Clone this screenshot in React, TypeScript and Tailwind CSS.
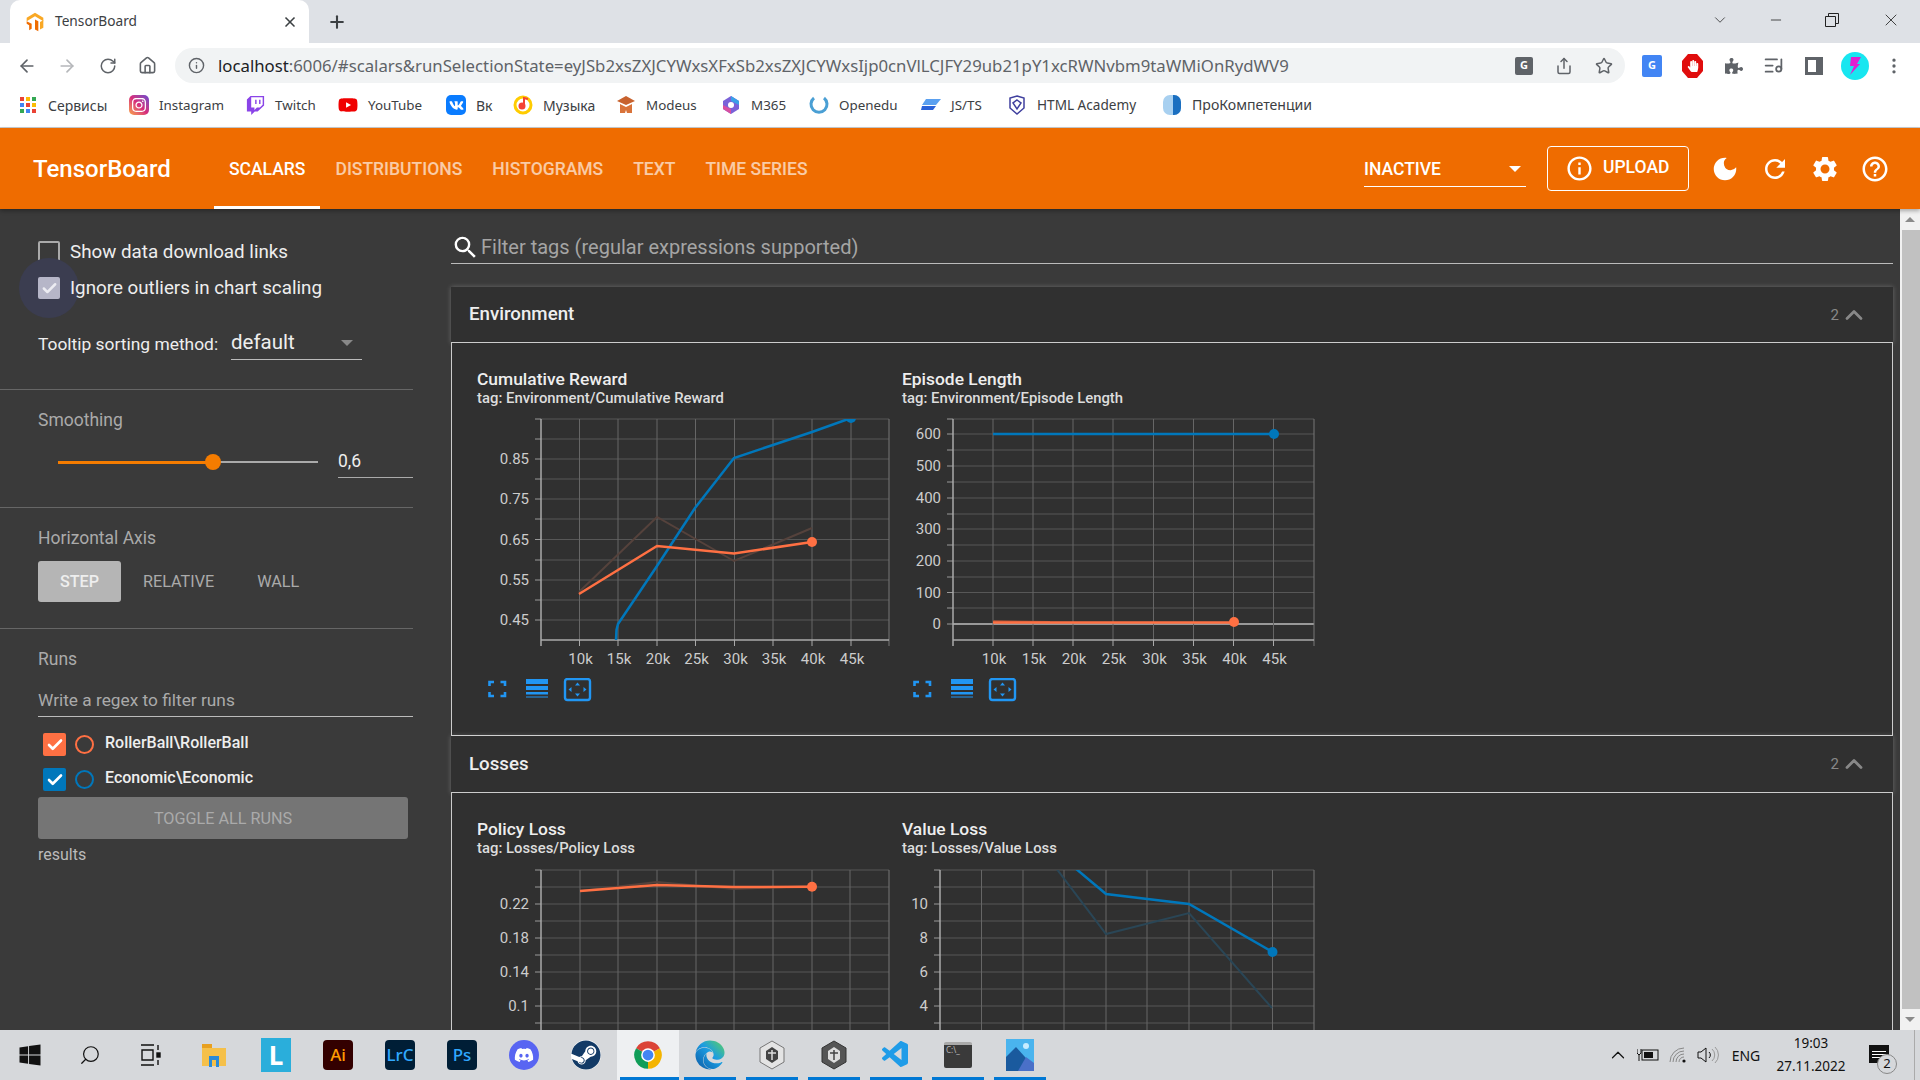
import { ArrowLeft, ArrowRight, RotateCw, Home, Info, Star, Share, X, Plus, Minus, ChevronDown, ChevronUp, ListMusic, EllipsisVertical, Search, Check } from 'lucide-react';
import { FaDiscord, FaEdge, FaHandPaper, FaPuzzlePiece, FaSteam, FaTwitch, FaVk, FaWindows, FaYoutube, FaInstagram } from 'react-icons/fa';
import { MdDarkMode, MdHelpOutline, MdInfoOutline, MdRefresh, MdSearch, MdSettings } from 'react-icons/md';
import { VscVscode } from 'react-icons/vsc';
import type { ReactNode } from 'react';

const ORANGE = '#ff7043';
const BLUE = '#0077bb';

/* ---------- browser chrome ---------- */

function TensorIcon({ size = 20 }: { size?: number }) {
  return (
    <svg width={size} height={size} viewBox="0 0 24 24">
      <path d="M12 1 L22 7 V11 L12 5 L2 11 V7 Z" fill="#f9a825" />
      <path d="M2 11 L8 14 V20 L5 22 V16 L2 14 Z" fill="#ef6c00" />
      <path d="M12 9 L16 11 V23 L12 21 Z" fill="#ef6c00" />
      <path d="M18 12 L22 10 V19 L18 21 Z" fill="#f9a825" />
    </svg>
  );
}

// text widths differ per word in the reference font, so each label gets its own box
const bookmarks: { label: string; textClass: string; icon: ReactNode }[] = [
  {
    label: 'Сервисы',
    textClass: 'w-[60px] text-[14px]',
    icon: (
      <span className="grid grid-cols-3 gap-[2px] w-[16px]">
        {['#ea4335', '#fbbc04', '#34a853', '#4285f4', '#ea4335', '#fbbc04', '#34a853', '#4285f4', '#ea4335'].map((c, i) => (
          <span key={i} className="w-[4px] h-[4px]" style={{ background: c }} />
        ))}
      </span>
    ),
  },
  {
    label: 'Instagram',
    textClass: 'w-[65px] text-[13.4px]',
    icon: (
      <span className="w-[20px] h-[20px] rounded-[5px] bg-gradient-to-tr from-[#f9a03c] via-[#d6297b] to-[#6a3fd0] flex items-center justify-center text-white">
        <FaInstagram size={16} />
      </span>
    ),
  },
  { label: 'Twitch', textClass: 'w-[42px] text-[13.4px]', icon: <FaTwitch size={19} className="text-[#8a44e8]" /> },
  { label: 'YouTube', textClass: 'w-[57px] text-[13.4px]', icon: <FaYoutube size={22} className="text-[#f00000]" /> },
  {
    label: 'Вк',
    textClass: 'w-[16px] text-[14px]',
    icon: (
      <span className="w-[20px] h-[20px] rounded-[5px] bg-[#0a7cff] flex items-center justify-center text-white">
        <FaVk size={15} />
      </span>
    ),
  },
  {
    label: 'Музыка',
    textClass: 'w-[52px] text-[14px]',
    icon: (
      <svg width="20" height="20" viewBox="0 0 20 20">
        <circle cx="10" cy="10" r="8" fill="none" stroke="#fc0" strokeWidth="3" />
        <circle cx="9" cy="11" r="3.5" fill="#f44336" />
        <path d="M11 11 V3 L15 4" fill="none" stroke="#f44336" strokeWidth="2" />
      </svg>
    ),
  },
  {
    label: 'Modeus',
    textClass: 'w-[54px] text-[13.4px]',
    icon: (
      <svg width="20" height="20" viewBox="0 0 20 20">
        <path d="M10 1 L19 6 L10 10 L1 6 Z" fill="#c8622e" />
        <path d="M4 9 L10 12 L16 9 V18 H11 L10 15 L9 18 H4 Z" fill="#d9733a" />
      </svg>
    ),
  },
  {
    label: 'M365',
    textClass: 'w-[37px] text-[13.4px]',
    icon: (
      <svg width="20" height="20" viewBox="0 0 20 20">
        <path d="M10 1 L18 6 V14 L10 19 L2 14 V6 Z" fill="#7a62d8" />
        <path d="M10 1 L18 6 V10 L10 6 Z" fill="#3aa0e8" />
        <path d="M2 10 L10 14 V19 L2 14 Z" fill="#d84fa0" />
        <circle cx="10" cy="10" r="3" fill="#fff" />
      </svg>
    ),
  },
  {
    label: 'Openedu',
    textClass: 'w-[61px] text-[13.4px]',
    icon: (
      <svg width="20" height="20" viewBox="0 0 20 20">
        <path d="M5 3 A8 8 0 1 0 15 3" fill="none" stroke="#4a9fd4" strokeWidth="3" />
      </svg>
    ),
  },
  {
    label: 'JS/TS',
    textClass: 'w-[35px] text-[13.4px]',
    icon: (
      <svg width="20" height="20" viewBox="0 0 20 20">
        <path d="M5 4 H20 L15 10 H1 Z" fill="#5aa0f0" />
        <path d="M1 11 H15 L12 15 H0 Z" fill="#2a62d8" />
      </svg>
    ),
  },
  {
    label: 'HTML Academy',
    textClass: 'w-[104px] text-[13.6px]',
    icon: (
      <svg width="20" height="20" viewBox="0 0 20 20">
        <path d="M10 1 L17 3 V13 L10 19 L3 13 V3 Z" fill="none" stroke="#3f3f9e" strokeWidth="1.5" />
        <path d="M10 5 L14 8 L10 14 L6 8 Z" fill="none" stroke="#3f3f9e" strokeWidth="1.5" />
      </svg>
    ),
  },
  {
    label: 'ПроКомпетенции',
    textClass: 'w-[121px] text-[14.1px]',
    icon: (
      <svg width="20" height="22" viewBox="0 0 20 22">
        <rect x="1" y="1" width="18" height="20" rx="7" fill="#a8d0f0" />
        <path d="M11 1 H12 A7 7 0 0 1 19 8 V14 A7 7 0 0 1 12 21 H11 Z" fill="#1b6fc0" />
      </svg>
    ),
  },
];

function TabStrip() {
  return (
    <div className="h-[43px] bg-[#dee1e6] flex items-end shrink-0">
      <div className="ml-[10px] w-[299px] h-[43px] bg-white rounded-t-[10px] flex items-center pl-[15px] pr-[11px]">
        <TensorIcon />
        <span className="ml-[10px] text-[13.7px] text-[#3c4043] flex-1">TensorBoard</span>
        <X size={16} strokeWidth={2.5} className="text-[#3c4043]" />
      </div>
      <div className="h-[43px] flex items-center ml-[18px]">
        <Plus size={20} strokeWidth={2.5} className="text-[#3c4043]" />
      </div>
      <div className="ml-auto h-[43px] pb-[4px] flex items-center text-[#222]">
        <ChevronDown size={18} strokeWidth={1} className="mr-[39px]" />
        <Minus size={16} strokeWidth={1.2} className="mr-[41px]" />
        <svg width="14" height="14" viewBox="0 0 14 14" className="mr-[42px]">
          <path d="M0.5 3.5 H10.5 V13.5 H0.5 Z M3.5 3.5 V0.5 H13.5 V10.5 H10.5" fill="none" stroke="#222" />
        </svg>
        <X size={20} strokeWidth={1} className="mr-[19px]" />
      </div>
    </div>
  );
}

function Toolbar() {
  return (
    <div className="h-[42px] bg-white flex items-center shrink-0 text-[#5f6368] pt-[3px]">
      <ArrowLeft size={20} className="ml-[17px]" />
      <ArrowRight size={20} className="ml-[20px] text-[#b5b7ba]" />
      <RotateCw size={18} className="ml-[22px]" />
      <Home size={19} className="ml-[21px]" />
      <div className="ml-[18px] w-[1450px] h-[35px] rounded-full bg-[#f1f3f4] flex items-center pl-[13px] pr-[12px]">
        <Info size={17} />
        <span className="ml-[13px] text-[16.75px] text-[#5f6368] whitespace-nowrap">
          <span className="text-[#202124]">localhost</span>
          :6006/#scalars&amp;runSelectionState=eyJSb2xsZXJCYWxsXFxSb2xsZXJCYWxsIjp0cnVlLCJFY29ub21pY1xcRWNvbm9taWMiOnRydWV9
        </span>
        <span className="ml-auto flex items-center gap-[22px]">
          <span className="w-[18px] h-[18px] bg-[#5f6368] rounded-[2px] text-white text-[11px] font-bold flex items-center justify-center">G</span>
          <Share size={18} />
          <Star size={18} />
        </span>
      </div>
      <div className="ml-[17px] w-[20px] h-[22px] bg-[#4285f4] rounded-[2px] text-white text-[11px] font-bold flex items-center justify-center">G</div>
      <div className="ml-[20px] relative w-[21px] h-[24px] flex items-center justify-center text-white">
        <svg width="21" height="24" viewBox="0 0 21 24" className="absolute inset-0">
          <path d="M6 0 H15 L21 7 V17 L15 24 H6 L0 17 V7 Z" fill="#e00d0d" />
        </svg>
        <FaHandPaper size={12} className="relative" />
      </div>
      <FaPuzzlePiece size={18} className="ml-[22px]" />
      <ListMusic size={21} className="ml-[20px]" />
      <svg width="18" height="18" viewBox="0 0 18 18" className="ml-[21px]">
        <path d="M0 0 H18 V18 H0 Z M3 3 V15 H11 V3 Z" fill="#5f6368" fillRule="evenodd" />
      </svg>
      <div className="ml-[18px] w-[28px] h-[28px] rounded-full bg-[#18e6f0] flex items-center justify-center">
        <svg width="14" height="20" viewBox="0 0 14 20">
          <path d="M3 1 H13 L9 8 H12 L2 19 L6 10 H2 Z" fill="#e020d0" />
        </svg>
      </div>
      <EllipsisVertical size={20} className="ml-[15px]" />
    </div>
  );
}

function BookmarkBar() {
  return (
    <div className="h-[43px] bg-white border-b border-[#c9cccf] flex items-center pl-[18px] pb-[2px] gap-[21px] shrink-0">
      {bookmarks.map((b) => (
        <div key={b.label} className="flex items-center gap-[10px]">
          <span className="w-[20px] h-[22px] flex items-center justify-center">{b.icon}</span>
          <span className={`${b.textClass} text-[#3c4043] whitespace-nowrap`}>{b.label}</span>
        </div>
      ))}
    </div>
  );
}

/* ---------- tensorboard header ---------- */

const tabs = ['SCALARS', 'DISTRIBUTIONS', 'HISTOGRAMS', 'TEXT', 'TIME SERIES'];

function Header() {
  return (
    <div className="relative z-20 h-[81px] bg-[#ef6c00] flex items-stretch pl-[33px] pr-[20px] text-white shrink-0 font-[Roboto,sans-serif] shadow-[0_2px_4px_rgba(0,0,0,0.3)]">
      <div className="self-center text-[24px] font-medium w-[136px] whitespace-nowrap mr-[45px]">TensorBoard</div>
      {tabs.map((t, i) => (
        <div
          key={t}
          className={
            i === 0
              ? 'px-[15px] flex items-center text-[17.5px] font-medium border-b-[3px] border-white pt-[5px]'
              : 'px-[15px] flex items-center text-[17.5px] font-medium border-b-[3px] border-transparent pt-[5px] text-white/65'
          }
        >
          {t}
        </div>
      ))}
      <div className="ml-auto flex items-center">
        <div className="w-[162px] h-[34px] border-b border-white flex items-center justify-between pr-[5px] mt-[2px] text-[17.5px] font-medium">
          INACTIVE
          <span className="w-0 h-0 border-x-[6px] border-x-transparent border-t-[6px] border-t-white" />
        </div>
        <div className="ml-[21px] w-[142px] h-[45px] border border-white rounded-[4px] flex items-center pl-[17px] text-[17.5px] font-medium">
          <MdInfoOutline size={29} />
          <span className="ml-[9px] -mt-[2px]">UPLOAD</span>
        </div>
        <div className="ml-[11px] flex items-center">
          <div className="w-[50px] flex justify-center"><MdDarkMode size={30} /></div>
          <div className="w-[50px] flex justify-center"><MdRefresh size={30} /></div>
          <div className="w-[50px] flex justify-center"><MdSettings size={30} /></div>
          <div className="w-[50px] flex justify-center"><MdHelpOutline size={30} /></div>
        </div>
      </div>
    </div>
  );
}

/* ---------- sidebar ---------- */

function RunRow({ name, color }: { name: string; color: string }) {
  return (
    <div className="flex items-center ml-[5px] h-[23px]">
      <span className="w-[23px] h-[23px] rounded-[2px] flex items-center justify-center" style={{ background: color }}>
        <Check size={18} strokeWidth={3.5} className="text-white" />
      </span>
      <span className="ml-[9px] w-[19px] h-[19px] rounded-full border-2" style={{ borderColor: color }} />
      <span className="ml-[11px] text-[16px] font-medium text-[#eee] -mt-[3px]">{name}</span>
    </div>
  );
}

function Sidebar() {
  return (
    <div className="w-[413px] shrink-0 text-[#eee]">
      <div className="pl-[38px] pt-[32px] pb-[29px] border-b border-[#666]">
        <div className="flex items-center h-[22px]">
          <span className="w-[22px] h-[22px] rounded-[2px] border-2 border-[#aaa]" />
          <span className="ml-[10px] text-[18.8px] pt-[1px]">Show data download links</span>
        </div>
        <div className="relative flex items-center h-[22px] mt-[14px]">
          <span className="absolute left-[-19px] top-[-19px] w-[60px] h-[60px] rounded-full bg-[#3b3d50]" />
          <span className="relative w-[22px] h-[22px] rounded-[2px] bg-[#b6b6c8] flex items-center justify-center">
            <Check size={17} strokeWidth={3.5} className="text-[#ececf2]" />
          </span>
          <span className="relative ml-[10px] text-[18.8px] pt-[1px]">Ignore outliers in chart scaling</span>
        </div>
        <div className="flex items-center mt-[27px] h-[34px]">
          <span className="text-[17.4px] w-[193px] pt-[2px]">Tooltip sorting method:</span>
          <div className="w-[131px] h-[34px] border-b border-[#bbb] flex items-center justify-between pr-[9px] text-[20.5px]">
            default
            <span className="w-0 h-0 border-x-[6px] border-x-transparent border-t-[6px] border-t-[#888]" />
          </div>
        </div>
      </div>

      <div className="pl-[38px] pt-[20px] pb-[29px] border-b border-[#666]">
        <div className="h-[20px] leading-[20px] text-[17.5px] text-[#aaa]">Smoothing</div>
        <div className="flex items-center mt-[15px] h-[33px]">
          <div className="ml-[20px] w-[260px] h-[2px] bg-[#aaa] relative">
            <div className="h-[3px] w-[155px] bg-[#f57c00]" />
            <span className="absolute left-[147px] top-[-7px] w-[16px] h-[16px] rounded-full bg-[#f57c00]" />
          </div>
          <div className="ml-[20px] w-[75px] h-[33px] border-b border-[#aaa] flex items-center text-[17.5px]">0,6</div>
        </div>
      </div>

      <div className="pl-[38px] pt-[20px] pb-[26px] border-b border-[#666]">
        <div className="h-[20px] leading-[20px] text-[17.5px] text-[#aaa]">Horizontal Axis</div>
        <div className="flex items-center mt-[13px] text-[16.2px]">
          <div className="w-[83px] h-[41px] pt-[1px] rounded-[3px] bg-[#b5b5b5] text-[#eee] font-medium flex items-center justify-center">STEP</div>
          <div className="px-[22px] pt-[2px] text-[#aaa]">RELATIVE</div>
          <div className="px-[21px] pt-[2px] text-[#aaa]">WALL</div>
        </div>
      </div>

      <div className="pl-[38px] pt-[20px]">
        <div className="h-[20px] leading-[20px] text-[17.5px] text-[#aaa]">Runs</div>
        <div className="mt-[11px] h-[37px] border-b border-[#bbb] pt-[5px] flex items-center text-[17.3px] text-[#aaa]">Write a regex to filter runs</div>
        <div className="mt-[16px]">
          <RunRow name="RollerBall\RollerBall" color={ORANGE} />
        </div>
        <div className="mt-[12px]">
          <RunRow name="Economic\Economic" color={BLUE} />
        </div>
        <div className="mt-[6px] w-[370px] h-[42px] pt-[2px] rounded-[3px] bg-[#757575] text-[#aaa] text-[16.2px] flex items-center justify-center">TOGGLE ALL RUNS</div>
        <div className="mt-[6px] h-[20px] leading-[20px] text-[16px] text-[#bbb]">results</div>
      </div>
    </div>
  );
}

/* ---------- charts ---------- */

type Pt = [number, number];

type ChartProps = {
  title: string;
  tag: string;
  originX: number;
  originY: number;
  left: number;
  top: number;
  bottom: number;
  xTicks: { x: number; label: string }[];
  yMajor: { y: number; label: string }[];
  yMinor: number[];
  zeroY?: number;
  belowFold?: boolean;
  faded: { pts: Pt[]; color: string }[];
  lines: { pts: Pt[]; color: string; dot: Pt }[];
};

const right = (originX: number) => originX + 412;

function toPath(pts: Pt[]) {
  return pts.map((p) => p.join(',')).join(' ');
}

function ChartActions() {
  return (
    <svg width="104" height="24" viewBox="0 0 104 24" className="ml-[11px] mt-[6px]">
      <path d="M1.5 8 V4 H6 M12.5 4 H17 V8 M17 14 V18 H12.5 M6 18 H1.5 V14" fill="none" stroke="#2196f3" strokeWidth="2.6" />
      <rect x="38" y="1" width="22" height="5" fill="#2196f3" />
      <rect x="38" y="8" width="22" height="4" fill="#2196f3" />
      <rect x="38" y="14" width="22" height="2.5" fill="#2196f3" />
      <rect x="38" y="18.5" width="22" height="1" fill="#2196f3" />
      <rect x="77" y="1" width="25" height="21" rx="2.5" fill="none" stroke="#2196f3" strokeWidth="2.4" />
      <path d="M89.5 4.5 L87 7.5 H92 Z M89.5 18.5 L87 15.5 H92 Z M80.5 11.5 L83.5 9 V14 Z M98.5 11.5 L95.5 9 V14 Z" fill="#2196f3" />
    </svg>
  );
}

function Chart(p: ChartProps) {
  const r = right(p.originX);
  const clipId = `clip-${p.title.replace(' ', '')}`;
  return (
    <div className="w-[425px] shrink-0">
      <div className="h-[20px] leading-[20px] text-[17.4px] font-medium text-[#eee] whitespace-nowrap">{p.title}</div>
      <div className="h-[18px] leading-[18px] text-[14.87px] font-medium text-[#ddd] whitespace-nowrap">{p.tag}</div>
      <svg width="425" height="260" viewBox={`${p.originX} ${p.originY} 425 260`} className="mt-[5px] block font-[Roboto,sans-serif]">
        <defs>
          <clipPath id={clipId}>
            <rect x={p.left} y={p.top} width={r - p.left} height={p.bottom - p.top} />
          </clipPath>
        </defs>
        {p.yMinor.map((y) => (
          <g key={y}>
            <line x1={p.left - 6} x2={p.left} y1={y} y2={y} stroke="#999" />
            <line x1={p.left} x2={r} y1={y} y2={y} stroke="#575757" />
          </g>
        ))}
        {p.yMajor.map((t) => (
          <g key={t.label}>
            <line x1={p.left - 6} x2={p.left} y1={t.y} y2={t.y} stroke="#999" />
            <line x1={p.left} x2={r} y1={t.y} y2={t.y} stroke="#575757" />
            <text x={p.left - 12} y={t.y + 5} textAnchor="end" fontSize="15" fill="#ccc">{t.label}</text>
          </g>
        ))}
        {p.zeroY !== undefined && <line x1={p.left} x2={r} y1={p.zeroY} y2={p.zeroY} stroke="#999" strokeWidth="2" />}
        {p.xTicks.map((t) => (
          <g key={t.label}>
            <line x1={t.x} x2={t.x} y1={p.top} y2={p.bottom} stroke="#666" />
            <line x1={t.x} x2={t.x} y1={p.bottom} y2={p.bottom + 6} stroke="#aaa" />
            {!p.belowFold && (
              <text x={t.x + 1} y={p.bottom + 24} textAnchor="middle" fontSize="15" fill="#ccc">{t.label}</text>
            )}
          </g>
        ))}
        <line x1={r} x2={r} y1={p.top} y2={p.bottom + 6} stroke="#777" />
        <line x1={p.left} x2={p.left} y1={p.top} y2={p.bottom + 6} stroke="#aaa" strokeWidth="1.5" />
        <line x1={p.left} x2={r} y1={p.bottom} y2={p.bottom} stroke="#aaa" strokeWidth="1.5" />
        <g clipPath={`url(#${clipId})`}>
          {p.faded.map((f, i) => (
            <polyline key={i} points={toPath(f.pts)} fill="none" stroke={f.color} strokeWidth="2" />
          ))}
          {p.lines.map((l, i) => (
            <g key={i}>
              <polyline points={toPath(l.pts)} fill="none" stroke={l.color} strokeWidth="2.5" />
              <circle cx={l.dot[0]} cy={l.dot[1]} r="5" fill={l.color} />
            </g>
          ))}
        </g>
      </svg>
      {!p.belowFold && <ChartActions />}
    </div>
  );
}

const kLabels = ['10k', '15k', '20k', '25k', '30k', '35k', '40k', '45k'];
const xsLeft = [579.5, 618, 657, 695.5, 734.5, 773, 812, 851];
const xsRight = [993, 1033, 1073, 1113, 1153.5, 1193.5, 1233.5, 1273.5];
const xsValue = [981.5, 1023, 1064, 1106, 1147, 1189, 1231, 1272.5];

const withLabels = (xs: number[]) => xs.map((x, i) => ({ x, label: kLabels[i] }));

const rewardChart: ChartProps = {
  title: 'Cumulative Reward',
  tag: 'tag: Environment/Cumulative Reward',
  originX: 477,
  originY: 412,
  left: 541,
  top: 419,
  bottom: 640,
  xTicks: withLabels(xsLeft),
  yMajor: [
    { y: 459, label: '0.85' },
    { y: 499, label: '0.75' },
    { y: 539.5, label: '0.65' },
    { y: 580, label: '0.55' },
    { y: 620, label: '0.45' },
  ],
  yMinor: [419, 439, 479, 519, 560, 600],
  faded: [{ pts: [[579, 592], [657, 517], [734, 561], [812, 528]], color: '#55423c' }],
  lines: [
    { pts: [[616, 640], [616.5, 630], [618, 624], [657, 566], [695, 508], [734, 458], [812, 432], [851, 418]], color: BLUE, dot: [851, 418] },
    { pts: [[579, 594], [657, 546], [734, 553.5], [812, 542]], color: ORANGE, dot: [812, 542] },
  ],
};

const lengthChart: ChartProps = {
  title: 'Episode Length',
  tag: 'tag: Environment/Episode Length',
  originX: 902,
  originY: 412,
  left: 953,
  top: 419,
  bottom: 640,
  xTicks: withLabels(xsRight),
  yMajor: [
    { y: 434, label: '600' },
    { y: 466, label: '500' },
    { y: 498, label: '400' },
    { y: 529, label: '300' },
    { y: 561, label: '200' },
    { y: 592.5, label: '100' },
    { y: 624, label: '0' },
  ],
  yMinor: [419, 450, 482, 514, 545, 577, 608],
  zeroY: 624,
  faded: [{ pts: [[993, 621], [1050, 622]], color: '#8c4a35' }],
  lines: [
    { pts: [[993, 434], [1274, 434]], color: BLUE, dot: [1274, 434] },
    { pts: [[993, 622.5], [1234, 622.5]], color: ORANGE, dot: [1234, 622] },
  ],
};

const lossMinor = [870, 887, 921, 955, 989, 1023];

const policyChart: ChartProps = {
  title: 'Policy Loss',
  tag: 'tag: Losses/Policy Loss',
  originX: 477,
  originY: 862,
  left: 541,
  top: 870,
  bottom: 1091,
  belowFold: true,
  xTicks: withLabels([580, 618, 657, 696, 734, 773, 812, 850]),
  yMajor: [
    { y: 904, label: '0.22' },
    { y: 938, label: '0.18' },
    { y: 972, label: '0.14' },
    { y: 1006, label: '0.1' },
  ],
  yMinor: lossMinor,
  faded: [{ pts: [[580, 891], [657, 882], [734, 889], [812, 886]], color: '#55423c' }],
  lines: [{ pts: [[580, 891], [657, 885], [734, 887], [812, 886.7]], color: ORANGE, dot: [812, 886.7] }],
};

const valueChart: ChartProps = {
  title: 'Value Loss',
  tag: 'tag: Losses/Value Loss',
  originX: 902,
  originY: 862,
  left: 940,
  top: 870,
  bottom: 1091,
  belowFold: true,
  xTicks: withLabels(xsValue),
  yMajor: [
    { y: 904, label: '10' },
    { y: 938, label: '8' },
    { y: 972, label: '6' },
    { y: 1006, label: '4' },
  ],
  yMinor: lossMinor,
  faded: [{ pts: [[1056, 868], [1106, 934], [1189, 913], [1272, 1008]], color: '#2a4656' }],
  lines: [{ pts: [[1075, 868], [1106, 894], [1189, 904], [1272.5, 952]], color: BLUE, dot: [1272.5, 952] }],
};

function Pane({ name, charts, headClass }: { name: string; charts: ChartProps[]; headClass: string }) {
  return (
    <div>
      <div className={headClass}>
        <span className="text-[18.7px] font-medium text-[#eee]">{name}</span>
        <span className="ml-auto text-[15px] text-[#888] pt-[1px]">2</span>
        <ChevronUp size={28} strokeWidth={2.4} className="ml-[1px] text-[#888]" />
      </div>
      <div className="h-[393px] bg-[#303030] border-x border-b border-[#ccc] flex pl-[25px] pt-[26px]">
        {charts.map((c) => (
          <Chart key={c.title} {...c} />
        ))}
      </div>
    </div>
  );
}

function MainPane() {
  return (
    <div className="w-[1442px] ml-[38px] shrink-0">
      <div className="mt-[22px] h-[33px] border-b border-[#bbb] flex items-center">
        <MdSearch size={29} className="text-white" />
        <span className="ml-[1px] text-[20px] text-[#a5a5a5]">Filter tags (regular expressions supported)</span>
      </div>
      <div className="mt-[23px]">
        <Pane
          name="Environment"
          charts={[rewardChart, lengthChart]}
          headClass="h-[56px] bg-[#303030] border-b border-[#ccc] flex items-center pl-[18px] pr-[25px] shadow-[0_0_5px_rgba(255,255,255,0.25)]"
        />
        <Pane
          name="Losses"
          charts={[policyChart, valueChart]}
          headClass="h-[57px] bg-[#303030] border-b border-[#ccc] flex items-center pl-[18px] pr-[25px] shadow-[0_0_5px_rgba(255,255,255,0.25)]"
        />
      </div>
    </div>
  );
}

function Scrollbar() {
  return (
    <div className="ml-auto w-[20px] shrink-0 bg-[#f1f1f1] flex flex-col">
      <div className="h-[21px] flex items-center justify-center">
        <span className="w-0 h-0 border-x-[5px] border-x-transparent border-b-[5px] border-b-[#8a8a8a]" />
      </div>
      <div className="flex-1 ml-[2px] bg-[#c1c1c1]" />
      <div className="h-[21px] flex items-center justify-center">
        <span className="w-0 h-0 border-x-[5px] border-x-transparent border-t-[5px] border-t-[#8a8a8a]" />
      </div>
    </div>
  );
}

/* ---------- windows taskbar ---------- */

function AppBox({ bg, color, text }: { bg: string; color: string; text: string }) {
  return (
    <span className="w-[30px] h-[30px] rounded-[4px] flex items-center justify-center text-[17px] font-medium" style={{ background: bg, color }}>
      {text}
    </span>
  );
}

function UnityIcon({ dark }: { dark?: boolean }) {
  return (
    <svg width="28" height="30" viewBox="0 0 28 30">
      <path d="M14 1 L26 8 V22 L14 29 L2 22 V8 Z" fill={dark ? '#555' : '#e4e4e4'} stroke={dark ? '#333' : '#777'} />
      <path d="M14 7 L20 11 V19 L14 23 L8 19 V11 Z" fill={dark ? '#ddd' : '#444'} />
      <path d="M14 10 V20 M10 13 L18 13" stroke={dark ? '#444' : '#ddd'} strokeWidth="1.5" />
    </svg>
  );
}

function EdgeIcon() {
  return (
    <span className="relative flex">
      <svg width="0" height="0" className="absolute">
        <defs>
          <linearGradient id="edgeGrad" x1="0" y1="1" x2="1" y2="0">
            <stop offset="0" stopColor="#0c59a4" />
            <stop offset="0.55" stopColor="#1b9de2" />
            <stop offset="1" stopColor="#5ed25f" />
          </linearGradient>
        </defs>
      </svg>
      <FaEdge size={30} fill="url(#edgeGrad)" />
    </span>
  );
}

const taskApps: { icon: ReactNode; active?: boolean; open?: boolean }[] = [
  {
    icon: (
      <svg width="28" height="28" viewBox="0 0 28 28">
        <path d="M2 3 H12 V7 H26 V25 H2 Z" fill="#f5c04a" />
        <path d="M2 3 H12 V7 H2 Z" fill="#e8a020" />
        <path d="M9 26 V15 H19 V26 H16 V19 H12 V26 Z" fill="#2a8ad8" />
      </svg>
    ),
  },
  {
    icon: (
      <span className="w-[30px] h-[34px] bg-[#2aaedb] flex items-center justify-center text-white text-[26px] font-bold">L</span>
    ),
  },
  { icon: <AppBox bg="#330000" color="#ff9a00" text="Ai" /> },
  { icon: <AppBox bg="#001e36" color="#31a8ff" text="LrC" /> },
  { icon: <AppBox bg="#001e36" color="#31a8ff" text="Ps" /> },
  {
    icon: (
      <span className="w-[30px] h-[30px] rounded-full bg-[#5865f2] text-white flex items-center justify-center">
        <FaDiscord size={20} />
      </span>
    ),
  },
  {
    icon: (
      <span className="w-[30px] h-[30px] rounded-full bg-white flex items-center justify-center text-[#123a66]">
        <FaSteam size={30} />
      </span>
    ),
  },
  {
    active: true,
    open: true,
    icon: (
      <svg width="30" height="30" viewBox="0 0 24 24">
        <path d="M12 12 L2.47 6.5 A11 11 0 0 1 21.53 6.5 Z" fill="#db4437" />
        <path d="M12 12 L21.53 6.5 A11 11 0 0 1 12 23 Z" fill="#f4b400" />
        <path d="M12 12 L12 23 A11 11 0 0 1 2.47 6.5 Z" fill="#0f9d58" />
        <circle cx="12" cy="12" r="5.5" fill="#fff" />
        <circle cx="12" cy="12" r="4.3" fill="#4285f4" />
      </svg>
    ),
  },
  { open: true, icon: <EdgeIcon /> },
  { open: true, icon: <UnityIcon /> },
  { open: true, icon: <UnityIcon dark /> },
  { open: true, icon: <VscVscode size={32} className="text-[#1f9ce8]" /> },
  {
    open: true,
    icon: (
      <span className="w-[28px] h-[26px] bg-[#3a3a3a] border-t-[3px] border-[#aaa] rounded-[2px] text-[#bbb] text-[8px] leading-[10px] pl-[2px]">C:\_</span>
    ),
  },
  {
    open: true,
    icon: (
      <svg width="28" height="32" viewBox="0 0 28 32">
        <rect width="28" height="32" fill="#4ab4ee" />
        <circle cx="20" cy="7" r="3" fill="#c8ecff" />
        <path d="M0 32 V18 L10 8 L28 28 V32 Z" fill="#1a5a9e" />
        <path d="M12 32 L20 18 L28 24 V32 Z" fill="#4a70c8" />
      </svg>
    ),
  },
];

function Taskbar() {
  return (
    <div className="h-[50px] bg-[#d6d8db] flex items-stretch shrink-0 font-['Noto_Sans',sans-serif] text-[#111]">
      <div className="w-[60px] flex items-center justify-center"><FaWindows size={24} /></div>
      <div className="w-[60px] flex items-center justify-center">
        <Search size={22} strokeWidth={1.3} className="-scale-x-100" />
      </div>
      <div className="w-[60px] flex items-center justify-center">
        <svg width="22" height="22" viewBox="0 0 22 22" fill="none" stroke="#111" strokeWidth="1.4">
          <path d="M2 1 H15 M2 21 H15 M3 6 H14 V16 H3 Z M19 1 V6 M19 16 V21" />
          <rect x="18" y="9" width="3" height="4" fill="#111" />
        </svg>
      </div>
      <div className="ml-[3px] flex">
        {taskApps.map((a, i) => (
          <div key={i} className={a.active ? 'w-[62px] relative flex items-center justify-center bg-[#eef0f2]' : 'w-[62px] relative flex items-center justify-center'}>
            {a.icon}
            {a.open && (
              <span className={a.active ? 'absolute bottom-0 left-[3px] right-0 h-[3px] bg-[#0078d4]' : 'absolute bottom-0 left-[5px] right-[5px] h-[3px] bg-[#0078d4]'} />
            )}
          </div>
        ))}
      </div>
      <div className="ml-auto flex items-center pr-[5px] border-r border-[#aaa] mr-[5px]">
        <ChevronUp size={22} strokeWidth={1.3} className="mr-[8px]" />
        <svg width="22" height="14" viewBox="0 0 22 14" className="mr-[10px]">
          <rect x="5" y="2" width="16" height="10" fill="none" stroke="#111" />
          <rect x="7" y="4" width="9" height="6" fill="#111" />
          <path d="M0 1 V5 L2 7 L4 5 V1 M2 7 V13" stroke="#111" fill="none" />
        </svg>
        <svg width="20" height="16" viewBox="0 0 20 16" fill="none" stroke="#888" className="mr-[8px]">
          <path d="M1 15 A14 14 0 0 1 15 1 M4 15 A11 11 0 0 1 15 4 M7 15 A8 8 0 0 1 15 7 M10 15 A5 5 0 0 1 15 10" />
          <circle cx="15" cy="14" r="1.6" fill="#111" stroke="none" />
        </svg>
        <svg width="22" height="18" viewBox="0 0 22 18" fill="none" stroke="#111" className="mr-[9px]">
          <path d="M1 6 H4 L9 2 V16 L4 12 H1 Z M12 6 A4 4 0 0 1 12 12" />
          <path d="M15 3 A8 8 0 0 1 15 15 M18 1 A11 11 0 0 1 18 17" stroke="#999" />
        </svg>
        <span className="text-[14px] w-[36px] text-center">ENG</span>
        <div className="ml-[11px] w-[72px] text-[13.5px] leading-[23px] text-center">
          <div>19:03</div>
          <div>27.11.2022</div>
        </div>
        <div className="relative ml-[22px] mr-[20px] w-[20px] h-[18px] bg-[#111] flex flex-col justify-center gap-[2px] px-[3px] mb-[2px]">
          <span className="h-px bg-white" />
          <span className="h-px bg-white" />
          <span className="h-px bg-white" />
          <span className="absolute left-[8px] top-[9px] w-[20px] h-[20px] rounded-full border border-[#888] bg-[#d6d8db] flex items-center justify-center text-[13px] text-[#111]">2</span>
        </div>
      </div>
    </div>
  );
}

export default function App() {
  return (
    <div className="w-[1920px] h-[1080px] overflow-hidden flex flex-col bg-white font-['Noto_Sans',sans-serif]">
      <TabStrip />
      <Toolbar />
      <BookmarkBar />
      <Header />
      <div className="flex-1 min-h-0 flex bg-[#3a3a3a] overflow-hidden font-[Roboto,sans-serif]">
        <Sidebar />
        <MainPane />
        <Scrollbar />
      </div>
      <Taskbar />
    </div>
  );
}
